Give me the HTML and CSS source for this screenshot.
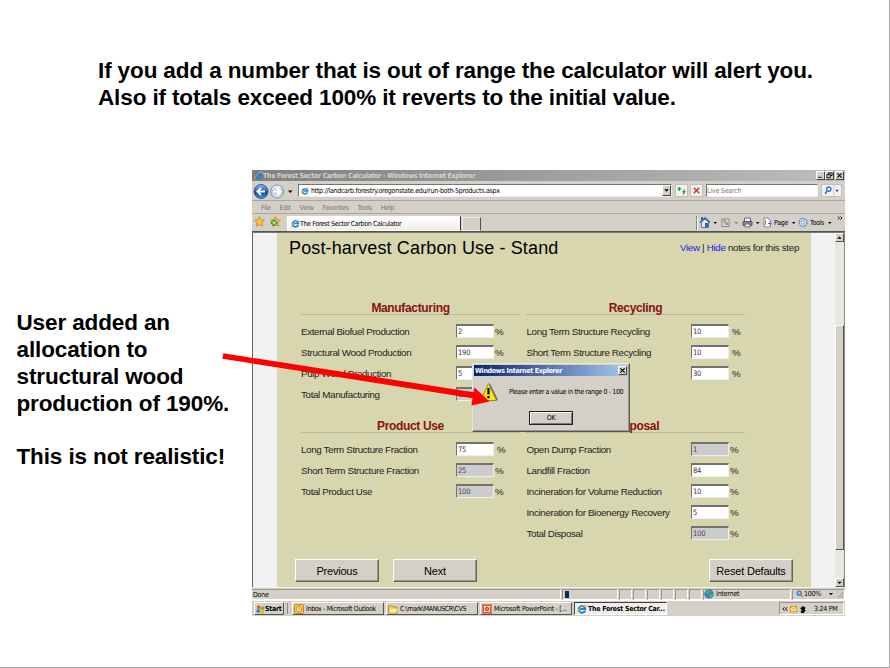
FILE: index.html
```html
<!DOCTYPE html>
<html lang="en">
<head>
<meta charset="utf-8">
<title>The Forest Sector Carbon Calculator</title>
<link rel="stylesheet" href="styles.css">
</head>
<body>
<svg width="0" height="0" class="defs" aria-hidden="true">
  <defs>
    <symbol id="ie" viewBox="0 0 16 16">
      <path d="M13 10.5A5.3 5.3 0 1 1 13.3 8H5" fill="none" stroke="#1685d8" stroke-width="3"/>
      <path d="M1.5 15C-1 12 7 2 14 1.5C16 1.5 15 4 14 5" fill="none" stroke="#f0b428" stroke-width="1.5"/>
    </symbol>
    <symbol id="star" viewBox="0 0 12 12"><path d="M6 .7l1.6 3.5 3.8.4-2.8 2.6.8 3.8L6 9.1 2.6 11l.8-3.8L.6 4.6l3.8-.4z" fill="#ffc83a" stroke="#d8871c"/></symbol>
  </defs>
</svg>
<main class="slide">
  <h1 class="headline">If you add a number that is out of range the calculator will alert you.<br>Also if totals exceed 100% it reverts to the initial value.</h1>
  <aside class="note">
    <p>User added an<br>allocation to<br>structural wood<br>production of 190%.</p>
    <p>This is not realistic!</p>
  </aside>
  <section class="window">
    <header class="titlebar">
      <svg class="i9"><use href="#ie"/></svg>
      <span class="title">The Forest Sector Carbon Calculator - Windows Internet Explorer</span>
      <span class="wbtns">
        <i class="wb"><svg viewBox="0 0 8 7"><path d="M1.500 5.500h4" stroke="#000"/></svg></i><i class="wb"><svg viewBox="0 0 8 7"><path d="M3 .5h4v3H5.500M3 0v2M1 2.500h4v3.500H1z" fill="none" stroke="#000"/></svg></i><i class="wb close"><svg viewBox="0 0 8 7"><path d="M1.500 1l5 5M6.500 1l-5 5" stroke="#000" stroke-width="1.200"/></svg></i>
      </span>
    </header>
    <div class="address">
      <svg class="nav" viewBox="0 0 44 18">
        <defs><linearGradient id="b" x2="0" y2="1"><stop stop-color="#8db6ee"/><stop offset=".48" stop-color="#2b62c4"/><stop offset=".52" stop-color="#0a3a9c"/><stop offset="1" stop-color="#3ba0e8"/></linearGradient><linearGradient id="f" x2="0" y2="1"><stop stop-color="#fff"/><stop offset=".5" stop-color="#b5c3da"/><stop offset="1" stop-color="#e4ecf6"/></linearGradient></defs>
        <circle cx="9" cy="9.500" r="7" fill="url(#b)" stroke="#3d5c95"/><path d="M13 9.500H5.500M9 6L5.500 9.500 9 13" fill="none" stroke="#fff" stroke-width="2"/>
        <circle cx="25" cy="9.500" r="6.500" fill="url(#f)" stroke="#7d8fac"/><path d="M21 9.500h7.500M25 6l3.500 3.500L25 13" fill="none" stroke="#fff" stroke-width="2"/>
        <path d="M36 8.500h4.500l-2.250 2.500z"/>
      </svg>
      <div class="url"><svg class="page-ie"><use href="#ie"/></svg><span>http://landcarb.forestry.oregonstate.edu/run-both-5products.aspx</span><i class="drop"><svg viewBox="0 0 8 10"><path d="M1.500 3.500h5L4 6.500z"/></svg></i></div>
      <i class="tool"><svg viewBox="0 0 12 12"><path d="M3.700 2.500v4M9 5v2.500q0 1.500-1.500 2.500" stroke="#29a329" stroke-width="1.500" fill="none"/><path d="M1.200 5L3.700 2l2.500 3zM6.500 6.500h4.500L8.500 9z" fill="#29a329"/></svg></i>
      <i class="tool"><svg viewBox="0 0 12 12"><path d="M3 3l6 6M9 3L3 9" stroke="#d22a1e" stroke-width="1.500"/></svg></i>
      <div class="search">Live Search</div>
      <i class="tool go"><svg viewBox="0 0 20 12"><circle cx="7" cy="4.500" r="2.300" fill="#fff" stroke="#2a6fe0" stroke-width="1.500"/><path d="M5.300 6.500L3 9.500" stroke="#2a6fe0" stroke-width="1.900"/><path d="M12.500 0v12" stroke="#c3cbd8"/><path d="M14 5.200h4L16 7.500z" fill="#1848c0"/></svg></i>
    </div>
    <nav class="menu"><span>File</span><span>Edit</span><span>View</span><span>Favorites</span><span>Tools</span><span>Help</span></nav>
    <div class="tabs">
      <svg class="star"><use href="#star"/></svg>
      <svg class="star two" viewBox="0 0 12 12"><use href="#star" width="12" height="12"/><path d="M4.500 4v7M1 7.500h7" stroke="#29902c" stroke-width="2.800"/><path d="M4.500 5.500v4M2.500 7.500h4" stroke="#e9ffe5"/></svg>
      <div class="tab"><svg class="i9"><use href="#ie"/></svg><span>The Forest Sector Carbon Calculator</span></div>
      <i class="newtab"></i>
      <div class="cmd">
        <svg viewBox="0 0 150 17">
          <path d="M1.500 2v14" stroke="#8a8780"/><path d="M2.500 2v14" stroke="#fff"/>
          <path d="M5 8.500L10 4l5 4.500" fill="none" stroke="#345a9c" stroke-width="1.500"/><path d="M6.500 8v5.500h7V8L10 5z" fill="#dfe9f8" stroke="#5577b0"/><path d="M10 9h3v4h-3z" fill="#375fa5"/><path d="M6 3h2v3H6z" fill="#375fa5"/>
          <path d="M18.500 8H22l-1.750 2z"/><path d="M39.500 8H43l-1.750 2z" fill="#777"/>
          <rect x="27" y="5" width="7" height="7.500" fill="#ddd" stroke="#888"/><path d="M28.500 8q2.500 0 2.500 3M28.500 6.500q4 0 4 4.500" fill="none" stroke="#777"/>
          <path d="M49.500 4h6v4h-6z" fill="#eaf1fc" stroke="#667"/><path d="M48 7.500h9v4h-9z" fill="#888d95" stroke="#555a64"/><path d="M50 10h5v3h-5z" fill="#fff" stroke="#667"/>
          <path d="M61 8h3.500l-1.750 2zM97 8h3.500l-1.750 2zM133 8h3.500l-1.750 2z"/>
          <path d="M69 4h4l2.500 2.500v6.500H69z" fill="#fff" stroke="#7a8594"/><path d="M70.500 6v5" stroke="#d97a38"/><path d="M73 9.500h3M74.500 8l2 1.500-2 1.500" stroke="#4a72b8" fill="none"/>
          <circle cx="108" cy="8.500" r="4" fill="#cfe3f5" stroke="#6a93bf" stroke-width="1.500" stroke-dasharray="2 .6"/><circle cx="108" cy="8.500" r="1.700" fill="#fff" stroke="#76a0c8"/>
          <path d="M143 2.500l1.500 1.500-1.500 1.500M145.500 2.500L147 4l-1.500 1.500" stroke="#000" fill="none" stroke-width=".9"/>
        </svg>
        <span class="c-page">Page</span><span class="c-tools">Tools</span>
      </div>
    </div>
    <div class="viewport">
      <div class="content">
        <div class="pagehead"><h2>Post-harvest Carbon Use - Stand</h2><p class="links"><a>View</a> | <a>Hide</a> notes for this step</p></div>
        <div class="forms">
          <section class="group">
            <h3>Manufacturing</h3>
            <div class="row"><label>External Biofuel Production</label><b>2</b><em>%</em></div>
            <div class="row"><label>Structural Wood Production</label><b>190</b><em>%</em></div>
            <div class="row"><label>Pulp Wood Production</label><b>5</b></div>
            <div class="row"><label>Total Manufacturing</label><b class="off">100</b></div>
          </section>
          <section class="group right wide">
            <h3>Recycling</h3>
            <div class="row"><label>Long Term Structure Recycling</label><b>10</b><em>%</em></div>
            <div class="row"><label>Short Term Structure Recycling</label><b>10</b><em>%</em></div>
            <div class="row"><label></label><b>30</b><em>%</em></div>
          </section>
          <section class="group">
            <h3>Product Use</h3>
            <div class="row"><label>Long Term Structure Fraction</label><b>75</b><em class="gap">%</em></div>
            <div class="row"><label>Short Term Structure Fraction</label><b class="off">25</b><em>%</em></div>
            <div class="row"><label>Total Product Use</label><b class="off">100</b><em>%</em></div>
          </section>
          <section class="group right">
            <h3>Disposal</h3>
            <div class="row"><label>Open Dump Fraction</label><b class="off">1</b><em>%</em></div>
            <div class="row"><label>Landfill Fraction</label><b>84</b><em>%</em></div>
            <div class="row"><label>Incineration for Volume Reduction</label><b>10</b><em>%</em></div>
            <div class="row"><label>Incineration for Bioenergy Recovery</label><b>5</b><em>%</em></div>
            <div class="row"><label>Total Disposal</label><b class="off">100</b><em>%</em></div>
          </section>
        </div>
        <div class="actions"><button>Previous</button><button>Next</button><button class="reset">Reset Defaults</button></div>
      </div>
      <div class="scroll">
        <i class="sb"><svg viewBox="0 0 8 8"><path d="M1.500 5.500h5L4 2.800z"/></svg></i><i class="thumb"></i><i class="sb"><svg viewBox="0 0 8 8"><path d="M1.500 3h5L4 5.700z"/></svg></i>
      </div>
    </div>
    <footer class="status">
      <span class="done">Done</span><i class="prog"></i><i></i><i></i><i></i><i></i><i></i><i></i>
      <span class="zone"><svg viewBox="0 0 10 10"><circle cx="5" cy="5" r="4.300" fill="#2f86d8" stroke="#1f5fa0" stroke-width=".6"/><path d="M2 2.500Q4 .8 5.500 1.500L5 4 2.500 5.500zM5.500 5.500L9 5 7.500 8.300 5 8.500z" fill="#54b847"/></svg>Internet</span>
      <span class="pct"><svg viewBox="0 0 10 10"><circle cx="4" cy="4" r="2.500" fill="#9ccaff" stroke="#2f78d0" stroke-width="1.500"/><path d="M6 6l3 3" stroke="#b98a3c" stroke-width="1.600"/></svg><span>100%</span><svg class="arr" viewBox="0 0 8 8"><path d="M2 3h4L4 5.300z"/></svg><svg class="grip" viewBox="0 0 8 10"><path d="M1 9.500L8 2.500M4 9.500L8 5.500M6.500 9.500L8 8" stroke="#888"/></svg></span>
    </footer>
    <footer class="taskbar">
      <span class="task start"><svg viewBox="0 0 9 9"><path d="M1 1.500q2-1 3 0v3q-1-1-3 0z" fill="#e8502b"/><path d="M4.500 1.800q2 1 3.800 0v3q-2 1-3.800 0z" fill="#65b52d"/><path d="M.7 5.200q2-1 3 0v3q-1-1-3 0z" fill="#2a6be0"/><path d="M4.200 5.500q2 1 3.800 0v3q-2 1-3.800 0z" fill="#f4b71f"/></svg>Start</span>
      <i class="sep"></i>
      <span class="task t1"><svg viewBox="0 0 10 10"><rect x=".5" y=".5" width="9" height="9" rx="1" fill="#f9c054" stroke="#c5862b"/><circle cx="5" cy="5" r="2.600" fill="#fff4d0" stroke="#d98b1f"/><path d="M5 3.500V5l1.200.6" fill="none" stroke="#8a5a14" stroke-width=".7"/></svg>Inbox - Microsoft Outlook</span>
      <span class="task t2"><svg viewBox="0 0 10 10"><path d="M.5 2h3.500l1 1h4v6H.5z" fill="#f6d25f" stroke="#b98f2a"/><path d="M1 8.500L2.500 5h7L8 8.500z" fill="#fff0a0"/></svg>C:\mark\MANUSCR\CVS</span>
      <span class="task t3"><svg viewBox="0 0 10 10"><rect x=".5" y=".5" width="9" height="9" fill="#e4582d" stroke="#d08a70"/><rect x="2" y="2" width="6" height="6" fill="#ffd9c5"/><circle cx="5" cy="5" r="1.800" fill="#f08a50" stroke="#c8421c"/></svg>Microsoft PowerPoint - [...</span>
      <span class="task active"><svg><use href="#ie"/></svg>The Forest Sector Car...</span>
      <span class="tray"><svg viewBox="0 0 34 10"><path d="M5 3L3 5l2 2M8 3L6 5l2 2" fill="none" stroke="#000"/><rect x="11.500" y="2" width="7" height="6" fill="#ffe680" stroke="#c59a28"/><path d="M12 2.500l3 3 3-3" stroke="#c59a28" fill="none"/><path d="M22 4l2-1 1-1.500 2 1.500 1.500.5L27 5l1 2-2 2.500h-2.500L22.500 8 24 6.500z"/></svg>3:24 PM</span>
    </footer>
  </section>
  <section class="dialog">
    <header><span>Windows Internet Explorer</span><i class="wb"><svg viewBox="0 0 8 7"><path d="M1.500 1l5 5M6.500 1l-5 5" stroke="#000" stroke-width="1.200"/></svg></i></header>
    <div class="msg"><svg viewBox="0 0 20 20"><path d="M10 2.500L17.500 18H19L11.500 2.500z" fill="#65635c"/><path d="M9.500 1.500L17.500 18.500H1.500z" fill="#ffe716" stroke="#9a8c10" stroke-linejoin="round"/><path d="M9.500 6v6.500M9.500 14v2.200" stroke="#000" stroke-width="2.200"/></svg><span>Please enter a value in the range 0 - 100</span></div>
    <span class="ok">OK</span>
  </section>
  <svg class="arrow" viewBox="0 0 890 668"><path d="M223.300 353.300L473.500 392.300 474.500 387.500 489.500 401.500 471.500 405.500 472.500 398.300 222.300 358.700z" fill="#f00"/></svg>
</main>
</body>
</html>
```
FILE: styles.css
```css
* { box-sizing: border-box; }
body { margin: 0; background: #fff; }
i, em { font-style: normal; }
svg { display: block; flex: none; }
.defs { position: absolute; }
.slide { position: relative; width: 890px; height: 668px; overflow: hidden; display: grid; grid-template: 170px 1fr / 252px 593px; font-family: "Liberation Sans", Arial, sans-serif; border-right: 1px solid #aaa; border-bottom: 1px solid #aaa; }
.headline { grid-column: 1 / 3; margin: 57px 0 0 98px; font-size: 22.5px; line-height: 27px; letter-spacing: -.125px; white-space: nowrap; }
.note { padding: 139px 0 0 16.500px; font-size: 22.5px; line-height: 27px; letter-spacing: -.125px; font-weight: bold; white-space: nowrap; }
.note p { margin: 0 0 26px; }
.window { height: 446px; background: #d4d0c8; display: flex; flex-direction: column; font: 7px/10px "DejaVu Sans Condensed", "DejaVu Sans", sans-serif; letter-spacing: -.27px; color: #000; white-space: nowrap; }

.titlebar { height: 11px; background: linear-gradient(90deg, #808080, #bdbdbd); display: flex; align-items: center; padding: 0 1px 0 2px; color: #d6d2ca; font-weight: bold; }
.i9 { width: 9px; height: 9px; }
.title { letter-spacing: -.3px; }
.wbtns { display: flex; margin-left: auto; }
.wb { display: block; width: 9px; height: 9px; background: #d4d0c8; border: 1px solid; border-color: #fff #444 #444 #fff; }
.wb svg { width: 7px; height: 7px; }
.wb.close { margin-left: 1px; }

.address { height: 20px; display: flex; align-items: center; border-bottom: 1px solid #a9a69f; }
.nav { width: 44px; height: 18px; }
.url { margin-left: 2px; width: 374px; height: 13px; background: #fff; border: 1px solid #77756f; border-right-color: #eee; border-bottom-color: #eee; display: flex; align-items: center; }
.page-ie { width: 8px; height: 8px; margin: 0 2px 0 2px; }
.drop { margin-left: auto; width: 9px; height: 11px; background: #d4d0c8; border: 1px solid; border-color: #fff #444 #444 #fff; }
.drop svg { width: 7px; height: 9px; }
.tool { margin-left: 2px; width: 13px; height: 13px; background: #f2f2f0; border: 1px solid #c0bfc0; }
.url + .tool { margin-left: 3px; }
.tool svg { width: 11px; height: 11px; }
.search { margin-left: 3px; width: 112px; height: 13px; line-height: 12px; background: #fff; border: 1px solid #77756f; border-right-color: #eee; border-bottom-color: #eee; color: #777; letter-spacing: -.2px; }
.go { margin-left: 3px; width: 21px; }
.go svg { width: 19px; }

.menu { height: 13px; display: flex; align-items: center; gap: 8.800px; padding: 1px 0 0 7px; color: #77746e; border-bottom: 1px solid #a9a69f; border-left: 2px solid #d4d0c8; letter-spacing: -.22px; }
.tabs { height: 18px; display: flex; align-items: center; border-bottom: 1px solid #55534e; }
.star { width: 11px; height: 11px; margin: 0 0 2px 2px; }
.star.two { margin-left: 5px; }
.tab { margin: 2px 0 0 6px; width: 174px; height: 15px; background: linear-gradient(#fff, #efeeea); border: 1px solid #fff; border-right: 1px solid #333; display: flex; align-items: center; padding-left: 3px; letter-spacing: -.36px; }
.newtab { width: 19px; height: 14px; margin: 3px 0 0 1px; border: 1px solid #eee; border-right-color: #55534e; }
.cmd { margin-left: auto; width: 150px; height: 17px; position: relative; }
.cmd svg { width: 150px; height: 17px; }
.cmd span { position: absolute; top: 4px; }
.c-page { left: 79px; }
.c-tools { left: 115px; }

.viewport { height: 355px; background: #f2f2f2; border-left: 1px solid #666; border-top: 1px solid #777; display: flex; justify-content: space-between; padding-left: 24px; }
.content { width: 534px; background: #d8d6af; font-family: "Liberation Sans", Arial, sans-serif; letter-spacing: 0; display: flex; flex-direction: column; }
.pagehead { display: flex; justify-content: space-between; padding: 4px 12px 0 12px; height: 66px; }
.pagehead h2 { margin: 0; font-size: 18px; line-height: 22px; font-weight: normal; letter-spacing: .14px; }
.links { margin: 0; font-size: 9.800px; line-height: 22px; letter-spacing: -.33px; color: #222; }
.links a { color: #2018ee; }
.forms { padding-left: 24px; display: grid; grid-template-columns: 219px 219px; grid-template-rows: 118px 129px; column-gap: 6px; height: 247px; }
.group h3 { margin: 0 0 6.500px; height: 16px; line-height: 19px; text-align: center; font-size: 12px; letter-spacing: -.34px; color: #8b1010; border-bottom: 1px solid #b9b899; }
.row { height: 20.920px; display: grid; grid-template-columns: 155px 38px 20px; align-items: center; font-size: 9.800px; letter-spacing: -.36px; color: #222; }
.right .row { grid-template-columns: 165px 38px 20px; }
.row label { line-height: 16px; }
.right .row label { padding-left: .5px; }
.row b { height: 14px; margin-bottom: 1.500px; background: #fff; border: 1px solid; border-top: 2px solid #74736b; border-color: #74736b #eee #eee #74736b; font: 7.500px/11px "DejaVu Sans Condensed", sans-serif; letter-spacing: -.2px; color: #334; padding-left: 1px; }
.row b.off { background: #ccc; color: #445; }
.row em { padding-left: 1px; line-height: 18px; letter-spacing: 0; }
.row em.gap, .wide .row em { padding-left: 3px; }
.actions { display: flex; padding: 13px 18px 0 18px; gap: 14px; }
.actions button { width: 84px; height: 23px; padding: 0; border: 1px solid; border-color: #fff #66645e #66645e #fff; background: #d4d0c8; font: 11px/20px "Liberation Sans", Arial, sans-serif; letter-spacing: -.2px; box-shadow: inset -1px -1px #99968f; }
.actions .reset { margin-left: auto; }
.scroll { width: 10px; background: #e9e7e2; display: flex; flex-direction: column; justify-content: space-between; border-right: 1px solid #888; }
.sb { width: 9px; height: 9px; background: #d4d0c8; border: 1px solid; border-color: #fff #555 #555 #fff; }
.sb svg { width: 7px; height: 7px; }
.thumb { height: 225px; margin-top: 55px; background: #d4d0c8; border: 1px solid; border-color: #fff #555 #555 #fff; }

.status { height: 13px; display: flex; gap: 1px; align-items: center; border-top: 1px solid #eee; }
.status > * { height: 11px; border: 1px solid; border-color: #99968f #fff #fff #99968f; }
.status i { width: 13px; }
.status .done { width: 309px; border-left: 0; padding-left: 1px; }
.status .prog { width: 56px; padding: 1px 2px; }
.prog::before { content: ""; display: block; width: 4px; height: 7px; background: #0a246a; }
.zone { width: 88px; display: flex; align-items: center; letter-spacing: -.2px; }
.zone svg { width: 10px; height: 10px; margin-right: 2px; }
.pct { flex: 1; display: flex; align-items: center; padding-left: 3px; }
.pct svg { width: 8px; height: 8px; }
.pct .arr { margin-left: 6px; }
.pct .grip { margin-left: auto; }

.taskbar { height: 16px; display: flex; align-items: center; border-top: 1px solid #fff; padding-left: 2px; }
.task { height: 13px; display: flex; align-items: center; gap: 2px; border: 1px solid; border-color: #fff #555 #555 #fff; padding-left: 1px; }
.task svg { width: 10px; height: 10px; }
.task.t1 { letter-spacing: -.35px; }
.task.t2 { letter-spacing: -.4px; }
.start { width: 30px; font-weight: bold; gap: 0; }
.start svg { width: 9px; }
.sep { width: 1px; height: 11px; background: #888; margin: 0 4px 0 3px; }
.t1, .t2, .t3 { width: 92px; margin-right: 2px; }
.task.active { width: 93px; background: #f0eeea; border-color: #444 #fff #fff #444; font-weight: bold; gap: 1px; padding-left: 2px; }
.tray { margin: 0 1px 0 auto; width: 65px; height: 13px; display: flex; align-items: center; border: 1px solid; border-color: #99968f #fff #fff #99968f; }
.tray svg { width: 31px; height: 10px; margin-right: 3px; }

.dialog { position: absolute; left: 472px; top: 363px; width: 158px; height: 69px; background: #d4d0c8; border: 1px solid; border-color: #e8e6e0 #555 #555 #e8e6e0; display: flex; flex-direction: column; align-items: center; font: 7px/10px "DejaVu Sans Condensed", sans-serif; letter-spacing: -.33px; white-space: nowrap; box-shadow: inset -1px -1px #999; }
.dialog header { width: 154px; height: 11px; margin-top: 1px; background: linear-gradient(90deg, #0a246a, #a6caf0); color: #fff; font-weight: bold; display: flex; align-items: center; justify-content: space-between; padding: 0 1px; }
.msg { align-self: stretch; display: flex; padding: 6px 0 0 6px; height: 41px; }
.msg svg { width: 20px; height: 20px; }
.msg span { margin: 5px 0 0 10px; letter-spacing: -.36px; }
.ok { margin: -6px 0 0 0; width: 44px; height: 14px; border: 1px solid #222; box-shadow: inset 1px 1px #fff, inset -1px -1px #777; text-align: center; line-height: 12px; }
.arrow { position: absolute; left: 0; top: 0; width: 890px; height: 668px; pointer-events: none; }
```
